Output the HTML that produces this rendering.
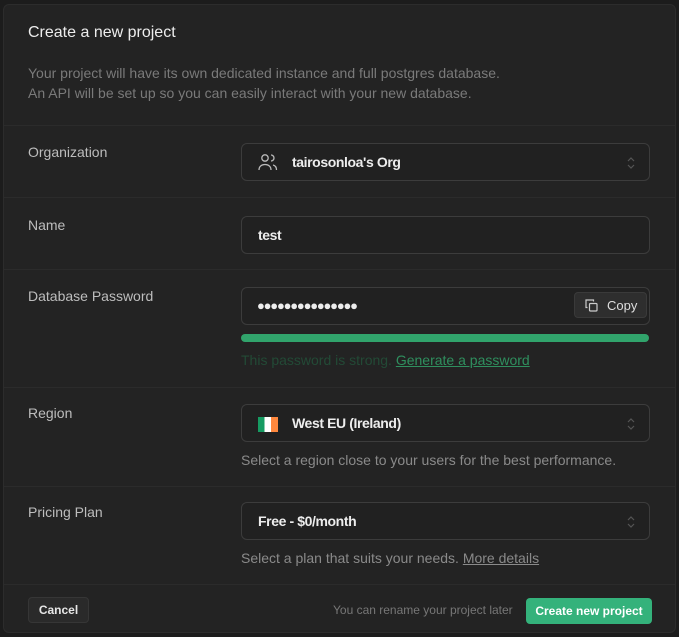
<!DOCTYPE html>
<html><head><style>
*{box-sizing:border-box;margin:0;padding:0}
body{width:679px;height:637px;background:#1c1c1c;font-family:"Liberation Sans",sans-serif;position:relative;overflow:hidden}
.card{position:absolute;left:3px;top:4px;width:673px;height:629px;background:#232323;border:1px solid #2c2c2c;border-radius:6px}
.a{position:absolute}
.hr{position:absolute;left:0;width:671px;height:1px;background:#2b2b2b}
.lbl{position:absolute;left:24px;color:#bdbdbd;font-size:14px}
.in{position:absolute;left:237px;width:409px;height:38px;border:1px solid #3c3c3c;border-radius:6px;background:#212121;color:#ededed;font-size:14px}
.in b{letter-spacing:-0.4px}
.hint{position:absolute;left:237px;color:#8a8a8a;font-size:14px}
.chev{position:absolute;right:14px;top:11px;width:8px;height:16px}
</style></head><body>
<div class="card">
<div class="a" style="left:24px;top:19px;color:#ededed;font-size:16px">Create a new project</div>
<div class="a" style="left:24px;top:58px;color:#7a7a7a;font-size:14px;line-height:20px">Your project will have its own dedicated instance and full postgres database.<br>An API will be set up so you can easily interact with your new database.</div>
<div class="hr" style="top:120px"></div>
<div class="lbl" style="top:139px">Organization</div>
<div class="in" style="top:138px">
<svg class="a" style="left:16px;top:9px" width="20" height="18" viewBox="0 0 20 18" fill="none" stroke="#bbb" stroke-width="1.3"><circle cx="7" cy="5" r="3.2"/><path d="M1 17c0-3.5 2.5-5.5 6-5.5s6 2 6 5.5"/><path d="M13 2a3 3 0 0 1 0 6M15 12c2 .5 3.5 2 3.5 5"/></svg>
<b class="a" style="left:50px;top:10px">tairosonloa's Org</b>
<svg class="chev" viewBox="0 0 8 16" fill="none" stroke="#555" stroke-width="1.2"><path d="M1 6l3-3 3 3M1 10l3 3 3-3"/></svg></div>
<div class="hr" style="top:192px"></div>
<div class="lbl" style="top:212px">Name</div>
<div class="in" style="top:211px"><b class="a" style="left:16px;top:10px">test</b></div>
<div class="hr" style="top:264px"></div>
<div class="lbl" style="top:283px">Database Password</div>
<div class="in" style="top:282px"><span class="a" style="left:15px;top:10px;letter-spacing:-1.2px;font-size:13px">●●●●●●●●●●●●●●●</span>
<div class="a" style="right:2px;top:4px;width:73px;height:26px;background:#2e2e2e;border:1px solid #3a3a3a;border-radius:4px;color:#ddd;font-size:13px"><svg class="a" style="left:10px;top:6px" width="13" height="13" viewBox="0 0 13 13" fill="none" stroke="#ccc" stroke-width="1.2"><rect x="4.5" y="4.5" width="7.5" height="7.5" rx="1"/><path d="M2.5 8.5H1V1h7.5v1.5"/></svg><span class="a" style="left:32px;top:5px">Copy</span></div></div>
<div class="a" style="left:237px;top:329px;width:408px;height:8px;border-radius:4px;background:#31a46c"></div>
<div class="a" style="left:237px;top:347px;font-size:14px;color:#234a36">This password is strong. <span style="color:#2f8f5e;text-decoration:underline">Generate a password</span></div>
<div class="hr" style="top:382px"></div>
<div class="lbl" style="top:400px">Region</div>
<div class="in" style="top:399px">
<div class="a" style="left:16px;top:12px;width:20px;height:15px;background:linear-gradient(90deg,#169b62 0 33%,#fff 33% 66%,#ff883e 66%)"></div>
<b class="a" style="left:50px;top:10px">West EU (Ireland)</b>
<svg class="chev" viewBox="0 0 8 16" fill="none" stroke="#555" stroke-width="1.2"><path d="M1 6l3-3 3 3M1 10l3 3 3-3"/></svg></div>
<div class="hint" style="top:447px">Select a region close to your users for the best performance.</div>
<div class="hr" style="top:481px"></div>
<div class="lbl" style="top:499px">Pricing Plan</div>
<div class="in" style="top:497px"><b class="a" style="left:16px;top:10px">Free - $0/month</b>
<svg class="chev" viewBox="0 0 8 16" fill="none" stroke="#555" stroke-width="1.2"><path d="M1 6l3-3 3 3M1 10l3 3 3-3"/></svg></div>
<div class="hint" style="top:545px">Select a plan that suits your needs. <span style="text-decoration:underline">More details</span></div>
<div class="hr" style="top:579px"></div>
<div class="a" style="left:24px;top:592px;width:61px;height:26px;background:#2a2a2a;border:1px solid #363636;border-radius:4px;color:#e6e6e6;font-size:12px;font-weight:bold;text-align:center;line-height:24px">Cancel</div>
<div class="a" style="left:329px;top:598px;color:#777;font-size:12px">You can rename your project later</div>
<div class="a" style="left:522px;top:593px;width:126px;height:26px;background:#34b27b;border-radius:4px;color:#fff;font-size:12px;font-weight:bold;text-align:center;line-height:26px">Create new project</div>
</div>
</body></html>
